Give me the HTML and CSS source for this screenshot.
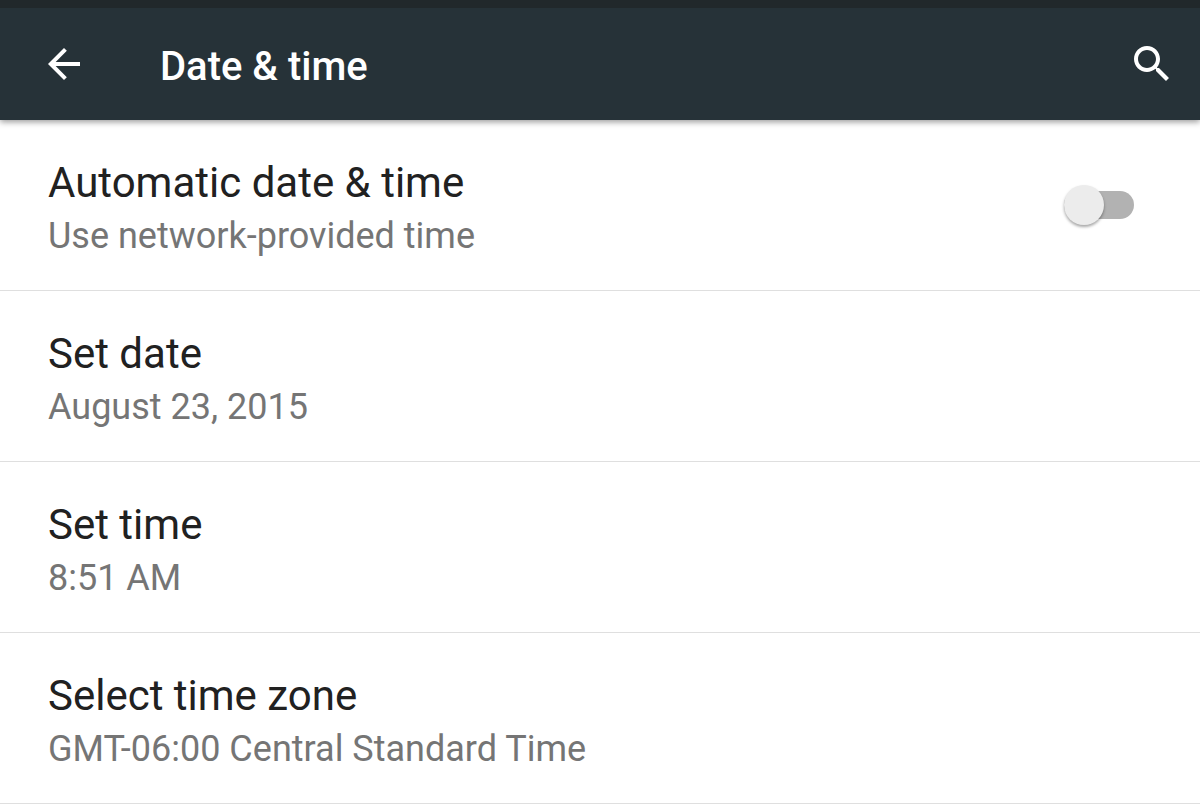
FILE: index.html
```
<!DOCTYPE html>
<html lang="en">
<head>
    <meta charset="UTF-8">
    <meta name="viewport" content="width=device-width, initial-scale=1.0">
    <title>Date &amp; time</title>
    <link rel="stylesheet" href="styles.css">
</head>
<body>
    <header class="toolbar">
        <button class="icon-button" type="button" aria-label="Back">
            <svg width="48" height="48" viewBox="0 0 24 24" fill="#fff"><path d="M20 11H7.83l5.59-5.59L12 4l-8 8 8 8 1.41-1.41L7.83 13H20v-2z"/></svg>
        </button>
        <h1>Date &amp; time</h1>
        <button class="icon-button" type="button" aria-label="Search">
            <svg width="48" height="48" viewBox="0 0 24 24" fill="#fff"><path d="M15.5 14h-.79l-.28-.27C15.41 12.59 16 11.11 16 9.5 16 5.91 13.09 3 9.5 3S3 5.91 3 9.5 5.91 16 9.5 16c1.61 0 3.09-.59 4.23-1.57l.27.28v.79l5 4.99L20.49 19l-4.99-5zm-6 0C7.01 14 5 11.99 5 9.5S7.01 5 9.5 5 14 7.01 14 9.5 11.99 14 9.5 14z"/></svg>
        </button>
    </header>
    <main class="settings">
        <label class="row" for="autoTime">
            <span class="text">
                <span class="title">Automatic date &amp; time</span>
                <span class="summary">Use network-provided time</span>
            </span>
            <input class="switch" type="checkbox" id="autoTime">
        </label>
        <button class="row" type="button">
            <span class="text">
                <span class="title">Set date</span>
                <span class="summary">August 23, 2015</span>
            </span>
        </button>
        <button class="row" type="button">
            <span class="text">
                <span class="title">Set time</span>
                <span class="summary">8:51 AM</span>
            </span>
        </button>
        <button class="row" type="button">
            <span class="text">
                <span class="title">Select time zone</span>
                <span class="summary">GMT-06:00 Central Standard Time</span>
            </span>
        </button>
    </main>
</body>
</html>
```
FILE: styles.css
```
* {
    box-sizing: border-box;
}
body {
    margin: 0;
    font-family: Roboto, sans-serif;
    background-color: #fff;
    color: #212121;
}
.toolbar {
    display: flex;
    align-items: center;
    height: 120px;
    padding: 0 24px 0 40px;
    border-top: 8px solid #21282b;
    background-color: #263238;
    color: #fff;
    box-shadow: 0 2px 6px rgba(0, 0, 0, 0.4);
}
.toolbar h1 {
    flex: 1;
    margin: 0;
    padding: 6px 0 0 72px;
    font-size: 40px;
    font-weight: 500;
    line-height: 48px;
}
.icon-button {
    width: 48px;
    height: 48px;
    padding: 0;
    border: none;
    background: none;
    cursor: pointer;
}
.icon-button svg {
    display: block;
}
.row {
    display: flex;
    align-items: center;
    width: 100%;
    padding: 28px 66px 28px 48px;
    border: none;
    border-bottom: 1px solid #dfdfdf;
    background: none;
    color: inherit;
    font-family: inherit;
    text-align: left;
    cursor: pointer;
}
.text {
    flex: 1;
    padding-top: 8px;
}
.title,
.summary {
    display: block;
}
.title {
    font-size: 42px;
    line-height: 54px;
}
.summary {
    font-size: 36px;
    line-height: 52px;
    color: #757575;
}
.switch {
    display: flex;
    align-items: center;
    width: 70px;
    height: 28px;
    margin: 0;
    border-radius: 14px;
    appearance: none;
    background-color: #b2b2b2;
    cursor: pointer;
}
.switch::before {
    content: "";
    width: 40px;
    height: 40px;
    border-radius: 50%;
    background-color: #ececec;
    box-shadow: 0 2px 3px rgba(0, 0, 0, 0.35);
}
.switch:checked {
    justify-content: flex-end;
    background-color: #80cbc4;
}
.switch:checked::before {
    background-color: #009688;
}
```
